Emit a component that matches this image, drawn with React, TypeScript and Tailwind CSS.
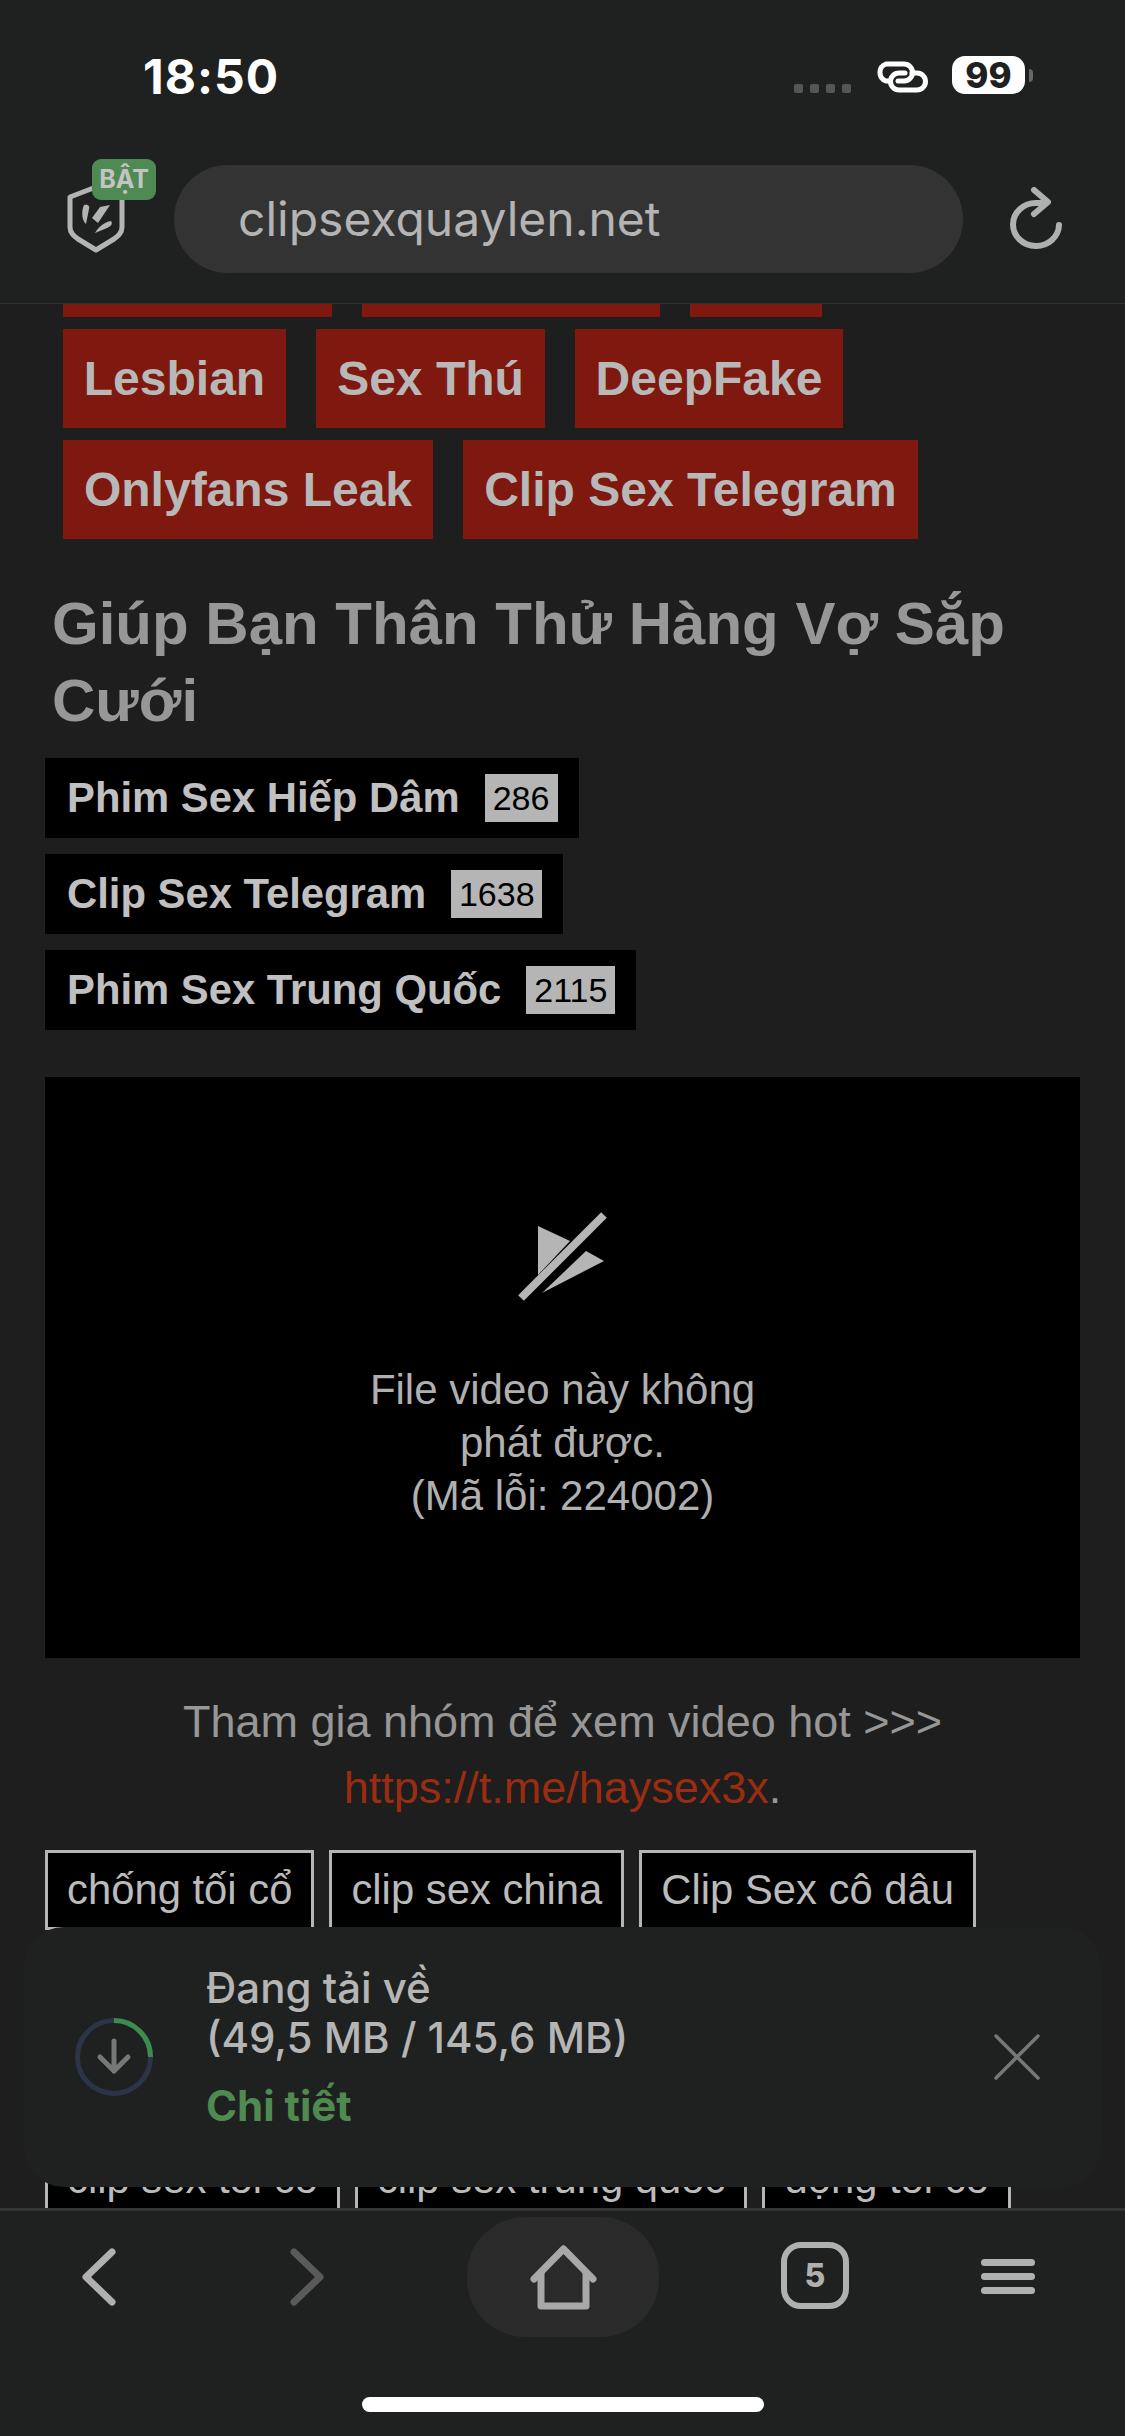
const sans = "font-['Liberation_Sans',Arial,sans-serif]";

function Shield() {
  return (
    <svg viewBox="0 0 58 70" className="w-[58px] h-[70px]" fill="none">
      <path d="M3 14 L29 4 L55 14 V44 C55 50 51 53 47 56 L29 67 L11 56 C7 53 3 50 3 44 Z" stroke="#b4b4b4" strokeWidth="5" strokeLinejoin="round" />
      <path d="M17 22 C21 21 23 23 22 26 L19 41 C15 38 14 28 17 22 Z" fill="#b4b4b4" />
      <path d="M43 22 L31 40 L25 35 L33 24 Z" fill="#b4b4b4" />
      <path d="M44 38 C46 41 44 43 40 45 L28 50 C32 43 38 39 44 38 Z" fill="#b4b4b4" />
    </svg>
  );
}

function StatusBar() {
  return (
    <div className="flex h-[150px] shrink-0">
      <span className="ml-[143px] mt-[50px] w-[134px] h-[54px] text-[48px] leading-[54px] font-bold text-white font-['Inter',sans-serif] tracking-[1px] whitespace-nowrap">18:50</span>
      <div className="ml-[517px] mt-[84px] flex h-[9px] gap-[7px]">
        <span className="w-[9px] h-[9px] rounded-[2px] bg-[#555555]" />
        <span className="w-[9px] h-[9px] rounded-[2px] bg-[#555555]" />
        <span className="w-[9px] h-[9px] rounded-[2px] bg-[#555555]" />
        <span className="w-[9px] h-[9px] rounded-[2px] bg-[#555555]" />
      </div>
      <svg viewBox="0 0 54 32" className="ml-[23px] mt-[61px] w-[54px] h-[32px]" fill="none" stroke="#fff" strokeWidth="5" strokeLinecap="round">
        <path d="M16 20 H12 A9 9 0 0 1 12 3 H30 A8.5 8.5 0 0 1 30 20 H24" />
        <path d="M38 12 H43 A8.5 8.5 0 0 1 43 29 H25 A8.5 8.5 0 0 1 25 12 H31" />
      </svg>
      <div className="ml-[24px] mt-[56px] w-[73px] h-[38px] rounded-[13px] bg-white flex items-center justify-center text-[35px] leading-none font-extrabold text-[#1f2120] font-['Inter',sans-serif]">99</div>
      <span className="ml-[4px] mt-[69px] w-[4px] h-[13px] rounded-r-full bg-[#666666]" />
    </div>
  );
}

function AddressBar() {
  return (
    <div className="flex h-[154px] shrink-0 border-b border-[#333333] box-border">
      <div className="relative ml-[67px] mt-[33px] w-[58px] h-[70px]">
        <Shield />
        <span className="absolute left-[25px] top-[-24px] w-[64px] h-[41px] rounded-[9px] bg-[#508a53] flex items-center justify-center text-[25px] leading-none font-bold text-[#c4c4c4] font-['Inter',sans-serif]">BẬT</span>
      </div>
      <div className="ml-[49px] mt-[15px] w-[789px] h-[108px] rounded-[54px] bg-[#333333] pl-[64px] flex items-center text-[48px] leading-none text-[#b4b4b4] font-['Inter',sans-serif]">clipsexquaylen.net</div>
      <svg viewBox="0 0 52 62" className="ml-[47px] mt-[37px] w-[52px] h-[62px]" fill="none" stroke="#b0b0b0" strokeWidth="6" strokeLinecap="round" strokeLinejoin="round">
        <path d="M49 38 A23 21.5 0 1 1 26 16 H36" />
        <path d="M24 3 L38 15 L24 27" />
      </svg>
    </div>
  );
}

function RedTag({ label, w }: { label?: string; w: string }) {
  return (
    <div className={`${w} h-[99px] bg-[#7f180e] flex items-center justify-center text-[48px] font-bold text-[#b8b8b8] ${sans}`}>{label}</div>
  );
}

function Pill({ label, count, badge }: { label: string; count: string; badge: string }) {
  return (
    <div className="self-start h-[80px] bg-black flex items-center pl-[22px] pr-[21px] gap-[25px]">
      <span className="text-[41.8px] leading-none font-bold text-[#c0c0c0]">{label}</span>
      <span className={`${badge} h-[48px] bg-[#b5b5b5] flex items-center justify-center text-[34px] leading-none text-black`}>{count}</span>
    </div>
  );
}

function OutlineTag({ label }: { label: string }) {
  return (
    <div className="h-[80px] border-[3px] border-[#b5b5b5] bg-black px-[19px] flex items-center text-[41.8px] leading-none text-[#bbbbbb] whitespace-nowrap">{label}</div>
  );
}

function Content() {
  return (
    <main className={`relative flex-1 min-h-0 overflow-hidden bg-[#1e1e1e] flex flex-col ${sans}`}>
      <div className="-mt-[86px] pl-[63px] flex flex-col gap-y-[12px] shrink-0">
        <div className="flex gap-x-[30px]">
          <RedTag w="w-[269px]" />
          <RedTag w="w-[298px]" />
          <RedTag w="w-[132px]" />
        </div>
        <div className="flex gap-x-[30px]">
          <RedTag w="w-[223px]" label="Lesbian" />
          <RedTag w="w-[229px]" label="Sex Thú" />
          <RedTag w="w-[268px]" label="DeepFake" />
        </div>
        <div className="flex gap-x-[30px]">
          <RedTag w="w-[370px]" label="Onlyfans Leak" />
          <RedTag w="w-[455px]" label="Clip Sex Telegram" />
        </div>
      </div>
      <h1 className="mt-[46px] ml-[52px] w-[1000px] text-[60px] leading-[77px] font-bold text-[#979797] shrink-0">Giúp Bạn Thân Thử Hàng Vợ Sắp Cưới</h1>
      <div className="mt-[19px] ml-[45px] flex flex-col gap-y-[16px] shrink-0">
        <Pill label="Phim Sex Hiếp Dâm" count="286" badge="w-[73px]" />
        <Pill label="Clip Sex Telegram" count="1638" badge="w-[91px]" />
        <Pill label="Phim Sex Trung Quốc" count="2115" badge="w-[89px]" />
      </div>
      <div className="mt-[47px] ml-[45px] w-[1035px] h-[581px] shrink-0 bg-black flex flex-col items-center pt-[135px]">
        <svg viewBox="0 0 89 89" className="w-[89px] h-[89px]">
          <path d="M20 14 L52 29 L20 63 Z" fill="#b5b5b5" />
          <path d="M68 39 L86 49 L24 81 Z" fill="#b5b5b5" />
          <path d="M3 86 L86 3" stroke="#b5b5b5" strokeWidth="8" />
        </svg>
        <div className="mt-[62px] text-center text-[42px] leading-[53px] text-[#b0b0b0]">
          File video này không<br />phát được.<br />(Mã lỗi: 224002)
        </div>
      </div>
      <p className="mt-[31px] text-center text-[45px] leading-[66px] text-[#979797] shrink-0 ml-[45px] w-[1035px]">
        Tham gia nhóm để xem video hot &gt;&gt;&gt;<br /><span className="text-[#9a2c12]">https://t.me/haysex3x</span>.
      </p>
      <div className="mt-[29px] ml-[45px] flex gap-x-[15px] shrink-0">
        <OutlineTag label="chống tối cổ" />
        <OutlineTag label="clip sex china" />
        <OutlineTag label="Clip Sex cô dâu" />
      </div>
      <div className="mt-[209px] ml-[45px] flex gap-x-[15px] shrink-0">
        <OutlineTag label="clip sex tối cổ" />
        <OutlineTag label="clip sex trung quốc" />
        <OutlineTag label="động tối cổ" />
      </div>
    </main>
  );
}

function DownloadToast() {
  return (
    <div className="absolute left-[24px] top-[1927px] w-[1077px] h-[260px] rounded-[40px] bg-[#1f2120] flex font-['Inter',sans-serif]">
      <svg viewBox="0 0 78 78" className="ml-[51px] mt-[91px] w-[78px] h-[78px] shrink-0" fill="none">
        <circle cx="39" cy="39" r="36.5" stroke="#2c3548" strokeWidth="5" />
        <path d="M39 2.5 A36.5 36.5 0 0 1 75.5 39" stroke="#3c8c50" strokeWidth="5" />
        <path d="M39 23 V53 M25 39 L39 53 L53 39" stroke="#777777" strokeWidth="5" strokeLinecap="round" strokeLinejoin="round" />
      </svg>
      <div className="ml-[53px] mt-[36px] flex flex-col text-[42px] leading-[50px] text-[#b5b5b5] font-medium w-[760px] shrink-0">
        <span>Đang tải về</span>
        <span>(49,5 MB / 145,6 MB)</span>
        <span className="mt-[18px] font-bold text-[#4f8a50]">Chi tiết</span>
      </div>
      <svg viewBox="0 0 46 46" className="ml-[28px] mt-[107px] w-[46px] h-[46px] shrink-0" fill="none" stroke="#777777" strokeWidth="3.5" strokeLinecap="round">
        <path d="M2 2 L44 44 M44 2 L2 44" />
      </svg>
    </div>
  );
}

function BottomBar() {
  return (
    <div className="relative h-[228px] shrink-0 bg-[#1f2120] border-t-[3px] border-[#333333] box-border">
      <div className="flex">
        <svg viewBox="0 0 34 58" className="ml-[82px] mt-[37px] w-[34px] h-[58px]" fill="none" stroke="#b0b0b0" strokeWidth="7" strokeLinecap="round" strokeLinejoin="round">
          <path d="M30 4 L4 29 L30 54" />
        </svg>
        <svg viewBox="0 0 34 58" className="ml-[174px] mt-[37px] w-[34px] h-[58px]" fill="none" stroke="#5a5a5a" strokeWidth="7" strokeLinecap="round" strokeLinejoin="round">
          <path d="M4 4 L30 29 L4 54" />
        </svg>
        <div className="ml-[143px] mt-[6px] w-[192px] h-[120px] rounded-[58px] bg-[#2a2a2a] flex items-center justify-center">
          <svg viewBox="0 0 67 65" className="w-[67px] h-[65px]" fill="none" stroke="#a8a8a8" strokeWidth="7" strokeLinecap="round" strokeLinejoin="round">
            <path d="M4 34 L33.5 4 L63 34" />
            <path d="M11 28 V61 H56 V28" />
          </svg>
        </div>
        <div className="ml-[122px] mt-[31px] w-[68px] h-[67px] rounded-[20px] border-[6px] border-[#b0b0b0] flex items-center justify-center text-[32px] leading-none font-extrabold text-[#b0b0b0] font-['Inter',sans-serif]">5</div>
        <div className="ml-[132px] mt-[48px] w-[54px] flex flex-col gap-[7px]">
          <span className="h-[7px] rounded-full bg-[#b0b0b0]" />
          <span className="h-[7px] rounded-full bg-[#b0b0b0]" />
          <span className="h-[7px] rounded-full bg-[#b0b0b0]" />
        </div>
      </div>
      <div className="absolute left-[362px] bottom-[24px] w-[402px] h-[15px] rounded-full bg-white" />
    </div>
  );
}

export default function App() {
  return (
    <div className="relative w-[1125px] h-[2436px] overflow-hidden bg-[#1f2120] flex flex-col">
      <StatusBar />
      <AddressBar />
      <Content />
      <BottomBar />
      <DownloadToast />
    </div>
  );
}
